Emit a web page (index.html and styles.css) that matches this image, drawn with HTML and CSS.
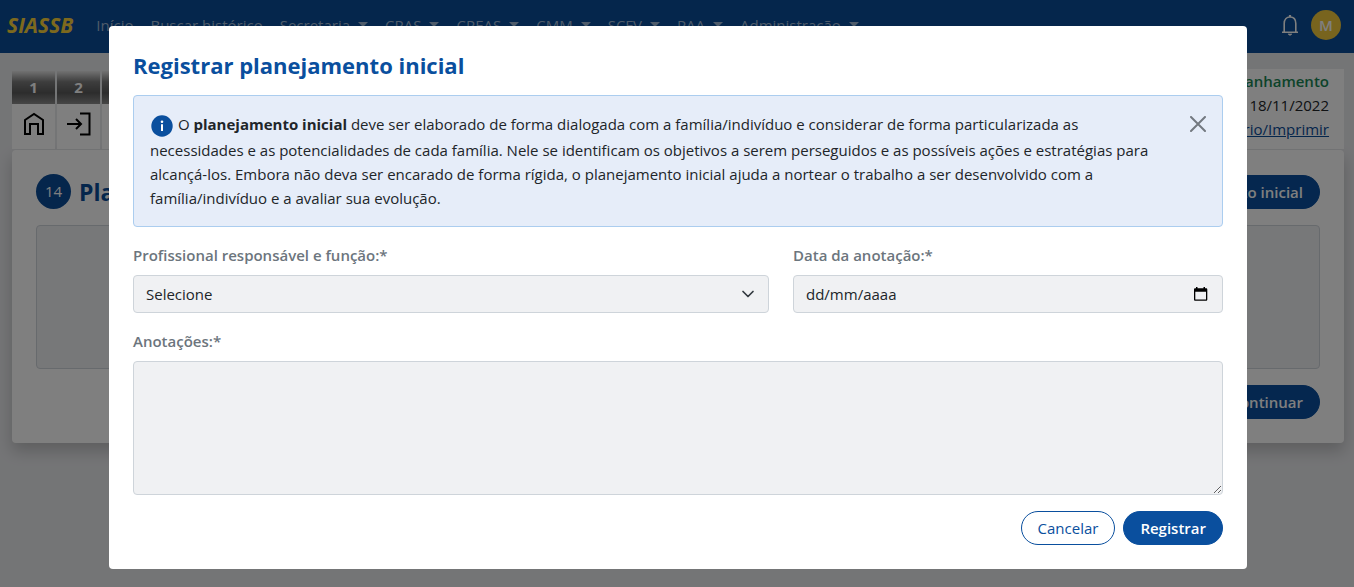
FILE: index.html
```html
<!DOCTYPE html>
<html lang="pt-BR">
<head>
<meta charset="utf-8">
<meta name="viewport" content="width=device-width, initial-scale=1">
<title>SIASSB</title>
<link rel="stylesheet" href="styles.css">
</head>
<body>
<header class="navbar">
  <a class="brand" href="#">SIASSB</a>
  <nav class="menu">
    <a class="menu-link" href="#">Início</a>
    <a class="menu-link" href="#">Buscar histórico</a>
    <a class="menu-link has-caret" href="#">Secretaria</a>
    <a class="menu-link has-caret" href="#">CRAS</a>
    <a class="menu-link has-caret" href="#">CREAS</a>
    <a class="menu-link has-caret" href="#">CMM</a>
    <a class="menu-link has-caret" href="#">SCFV</a>
    <a class="menu-link has-caret" href="#">PAA</a>
    <a class="menu-link has-caret" href="#">Administração</a>
  </nav>
  <div class="account">
    <button class="bell" type="button" aria-label="Notificações">
      <svg width="20" height="22" viewBox="0 0 20 22" fill="none" stroke="currentColor" stroke-width="1.6"><path d="M2 18.200h16M4.200 18V9.500C4.200 5.500 6.500 3 10 3s5.800 2.500 5.800 6.500V18"/><path d="M10 3V1" stroke-width="2.200"/><path d="M8 20h4l-2 1.500z" fill="currentColor" stroke-width=".6"/></svg>
    </button>
    <button class="avatar" type="button">M</button>
  </div>
</header>

<main class="page">
  <div class="summary">
    <nav class="steps">
      <a class="step" href="#" aria-label="Etapa 1"><span class="step-number">1</span><span class="step-icon"><svg width="24" height="24" viewBox="0 0 24 24" fill="none" stroke="currentColor" stroke-width="2"><path d="M3 8 12 2l9 6v14h-5V12H8v10H3z"/></svg></span></a>
      <a class="step" href="#" aria-label="Etapa 2"><span class="step-number">2</span><span class="step-icon"><svg width="24" height="24" viewBox="0 0 24 24" fill="none" stroke="currentColor" stroke-width="2"><path d="M13 1.500h9.500v21H13M0 12h14M9 7l5 5-5 5"/></svg></span></a>
      <span class="step"><span class="step-number"></span><span class="step-icon"></span></span>
    </nav>
    <div class="status">
      <strong class="status-name">Em acompanhamento</strong>
      <span>18/11/2022</span>
      <a class="status-link" href="#">Prontuário/Imprimir</a>
    </div>
  </div>

  <section class="card">
    <div class="card-head">
      <span class="badge">14</span>
      <h1 class="card-title">Planejamento</h1>
      <button class="btn btn-primary" type="button">Planejamento inicial</button>
    </div>
    <div class="record"></div>
    <div class="card-foot">
      <button class="btn btn-primary" type="button">Continuar</button>
    </div>
  </section>
</main>

<div class="overlay">
  <form class="modal" role="dialog" aria-labelledby="modal-title">
    <h2 class="modal-title" id="modal-title">Registrar planejamento inicial</h2>

    <div class="alert">
      <p class="alert-text"><svg class="info" width="22" height="22" viewBox="0 0 22 22"><circle cx="11" cy="11" r="10.700" fill="#0a4f9e"/><circle cx="11" cy="6.700" r="1.300" fill="#fff"/><path d="M11 9.200v6.800" stroke="#fff" stroke-width="2" fill="none"/></svg> O <strong>planejamento inicial</strong> deve ser elaborado de forma dialogada com a família/indivíduo e considerar de forma particularizada as necessidades e as potencialidades de cada família. Nele se identificam os objetivos a serem perseguidos e as possíveis ações e estratégias para alcançá-los. Embora não deva ser encarado de forma rígida, o planejamento inicial ajuda a nortear o trabalho a ser desenvolvido com a família/indivíduo e a avaliar sua evolução.</p>
      <button class="close" type="button" aria-label="Fechar"><svg width="16" height="16" viewBox="0 0 16 16" fill="none" stroke="currentColor" stroke-width="2" stroke-linecap="round"><path d="M1 1l14 14M15 1 1 15"/></svg></button>
    </div>

    <div class="fields">
      <div class="field">
        <label class="label" for="professional">Profissional responsável e função:*</label>
        <div class="control-wrap">
          <select class="control" id="professional"><option>Selecione</option></select>
          <svg class="control-icon" width="14" height="16" viewBox="0 0 14 16" fill="none" stroke="#343a40" stroke-width="1.700" stroke-linecap="round" stroke-linejoin="round"><path d="m2 5.500 5 5 5-5"/></svg>
        </div>
      </div>
      <div class="field">
        <label class="label" for="date">Data da anotação:*</label>
        <div class="control-wrap">
          <input class="control" id="date" type="text" placeholder="dd/mm/aaaa">
          <svg class="control-icon" width="16" height="16" viewBox="0 0 16 16"><path fill="#000" fill-rule="evenodd" d="M3 1h1.500v1.200h6V1H12v1.200h1c.8 0 1.300.5 1.300 1.200v10c0 .8-.5 1.300-1.300 1.300H2.300C1.500 14.700 1 14.200 1 13.400v-10c0-.7.5-1.200 1.300-1.200H3zM2.300 5.800v7.600H13V5.800z"/></svg>
        </div>
      </div>
    </div>

    <label class="label" for="notes">Anotações:*</label>
    <textarea class="control notes" id="notes" rows="5"></textarea>

    <div class="actions">
      <button class="btn btn-outline" type="button">Cancelar</button>
      <button class="btn btn-primary" type="submit">Registrar</button>
    </div>
  </form>
</div>
</body>
</html>
```
FILE: styles.css
```css
* { box-sizing: border-box; }

body {
  min-height: 100vh;
  margin: 0;
  background: #e9eaed;
  color: #212529;
  font: 15px/24px "Open Sans", "Noto Sans", sans-serif;
}

button, input, select, textarea { font: inherit; }

.navbar {
  display: flex;
  align-items: center;
  height: 53px;
  padding: 0 13px 3px 7px;
  background: #0a4c98;
}

.brand {
  margin-right: 23px;
  color: #fbd33c;
  font-size: 21px;
  font-weight: 700;
  font-style: italic;
  text-decoration: none;
}

.menu {
  display: flex;
  gap: 17px;
  padding-bottom: 1px;
}

.menu-link {
  display: flex;
  align-items: center;
  gap: 8px;
  color: #9db7d5;
  text-decoration: none;
  white-space: nowrap;
}

.has-caret::after {
  content: "";
  border: 5px solid transparent;
  border-top-color: currentColor;
  border-bottom: 0;
}

.account {
  display: flex;
  align-items: center;
  gap: 11px;
  margin-left: auto;
}

.bell {
  display: flex;
  padding: 0;
  border: 0;
  background: none;
  color: #fff;
}

.avatar {
  width: 30px;
  height: 30px;
  padding: 0;
  border: 0;
  border-radius: 50%;
  background: #f0c83c;
  color: #fff;
  font-weight: 600;
}

.page { padding: 16px 10px 0 12px; }

.summary {
  display: flex;
  justify-content: space-between;
  align-items: flex-end;
}

.steps { display: flex; gap: 2px; }

.step {
  display: block;
  width: 43px;
  color: #000;
  text-decoration: none;
}

.step-number {
  display: block;
  height: 33px;
  background: linear-gradient(#e4e4e4, #7b7b7b 33%, #5a5a5a 66%, #8c8c8c);
  color: #fff;
  font-weight: 700;
  line-height: 32px;
  text-align: center;
}

.step-icon {
  display: flex;
  align-items: center;
  justify-content: center;
  height: 45px;
  padding-bottom: 5px;
  background: #fff;
}

.status {
  display: flex;
  flex-direction: column;
  width: 260px;
  height: 80px;
  padding: 0 15px;
  background: #fff;
  text-align: right;
}

.status-name { color: #198754; font-weight: 600; }
.status-link { color: #0a4c98; }

.card {
  margin-top: 1px;
  padding: 24px;
  border-radius: 4px;
  background: #fff;
  box-shadow: 0 8px 16px rgba(0, 0, 0, .2);
}

.card-head {
  display: flex;
  align-items: center;
  gap: 8px;
}

.badge {
  width: 35px;
  height: 35px;
  border-radius: 50%;
  background: #0a4c98;
  color: #fff;
  line-height: 35px;
  text-align: center;
}

.card-title {
  flex: 1;
  margin: 0;
  color: #0a4c98;
  font-size: 23px;
}

.record {
  height: 144px;
  margin: 16px 0;
  border: 1px solid #ced4da;
  border-radius: 4px;
  background: #eff0f3;
}

.card-foot { display: flex; justify-content: flex-end; }

.btn {
  height: 34px;
  padding: 0 16px;
  border: 1px solid #0a4f9e;
  border-radius: 17px;
  font-weight: 600;
  line-height: 32px;
}

.btn-primary { background: #0a4f9e; color: #fff; }
.btn-outline { background: #fff; color: #0a4f9e; font-weight: 500; }

.overlay {
  position: fixed;
  inset: 0;
  padding: 26px 107px 18px 109px;
  background: rgba(0, 0, 0, .5);
}

.modal {
  padding: 24px;
  border-radius: 4px;
  background: #fff;
}

.modal-title {
  margin: 0 0 15px;
  color: #0a4f9e;
  font-size: 22px;
  line-height: 30px;
}

.alert {
  display: flex;
  align-items: flex-start;
  justify-content: space-between;
  padding: 16px;
  border: 1px solid #abcdef;
  border-radius: 4px;
  background: #e6edf9;
}

.alert-text {
  max-width: 1020px;
  margin: 0;
}

.info {
  margin: 0 1px 1px;
  vertical-align: -8px;
}

.close {
  display: flex;
  padding: 4px 0;
  border: 0;
  background: none;
  color: #737980;
}

.fields {
  display: grid;
  grid-template-columns: 636fr 430fr;
  gap: 24px;
  margin: 16px 0;
}

.label {
  display: block;
  margin-bottom: 8px;
  color: #6c757d;
  font-weight: 600;
}

.control-wrap { position: relative; }

.control {
  display: block;
  width: 100%;
  height: 38px;
  padding: 6px 12px;
  border: 1px solid #ced4da;
  border-radius: 4px;
  background: #f0f1f3;
  color: #212529;
  appearance: none;
}

.control::placeholder { color: #212529; opacity: 1; }

.control-icon {
  position: absolute;
  top: 11px;
  right: 14px;
  pointer-events: none;
}

.notes { height: 134px; resize: vertical; }

.actions {
  display: flex;
  justify-content: flex-end;
  gap: 8px;
  margin-top: 16px;
}
```
